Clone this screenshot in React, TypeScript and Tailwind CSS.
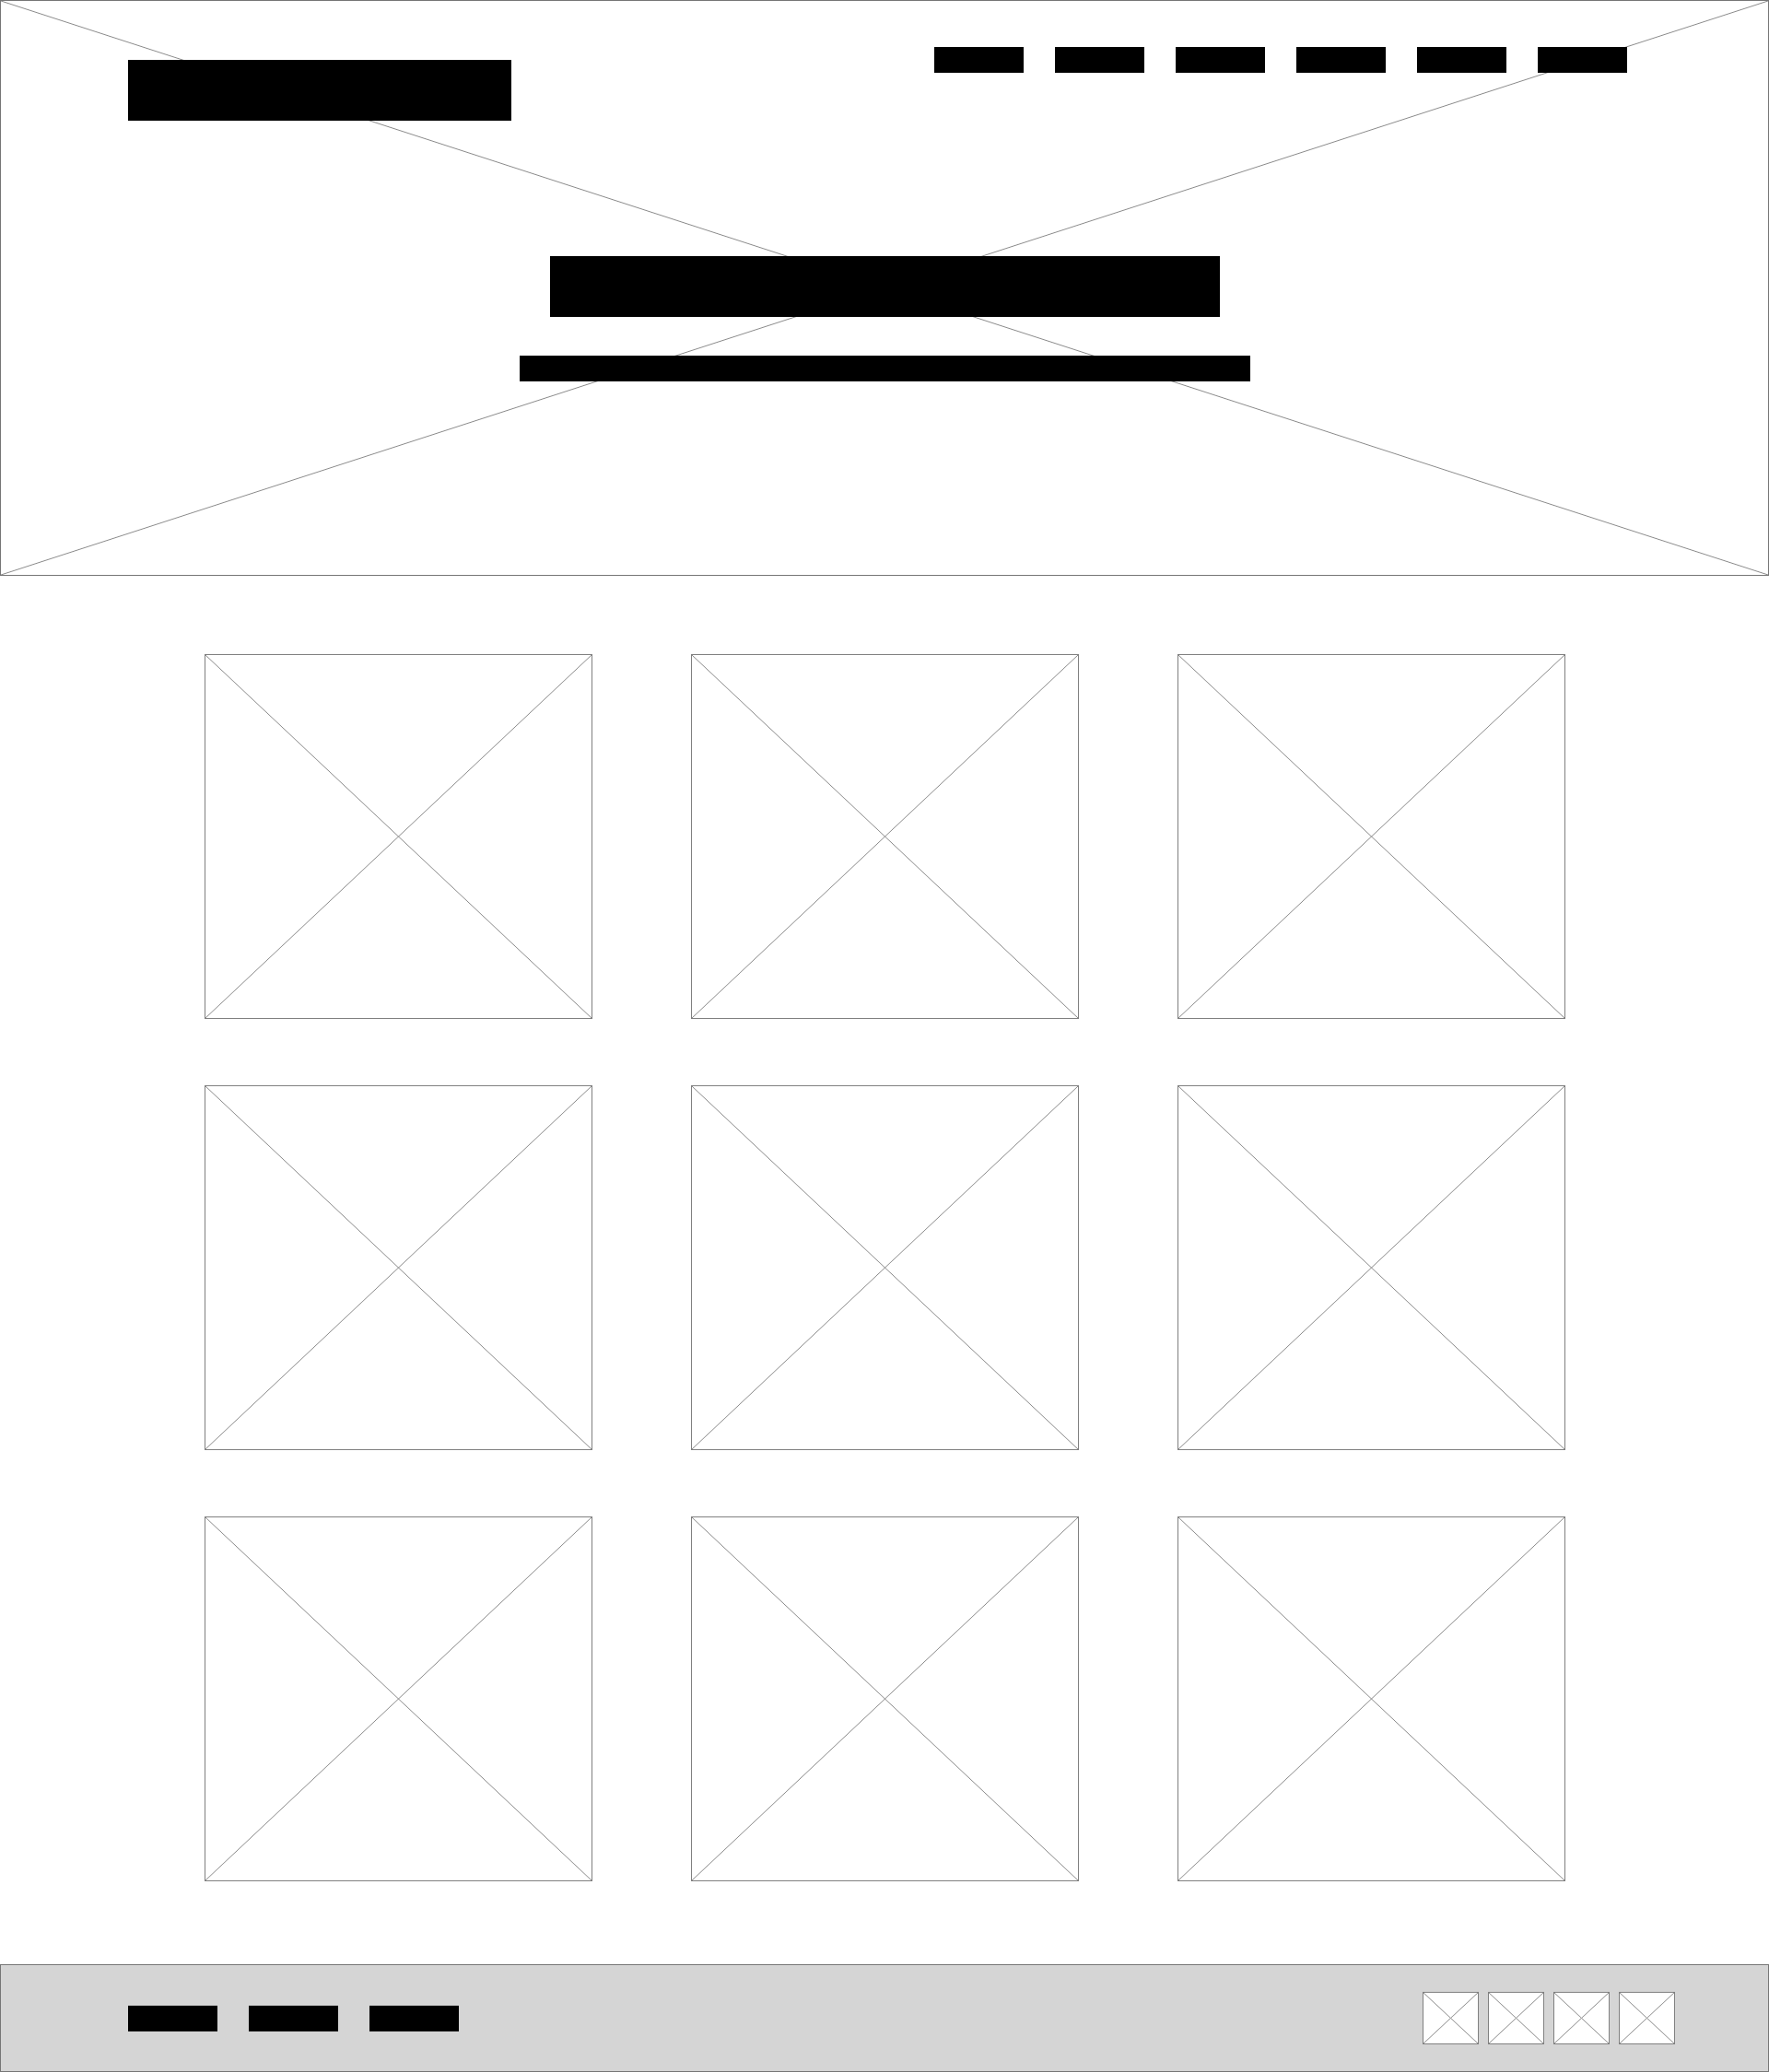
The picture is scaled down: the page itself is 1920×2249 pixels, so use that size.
import React from "react";

function Cross({ color = "#8a8a8a" }: { color?: string }) {
  return (
    <svg
      className="absolute inset-0 w-full h-full pointer-events-none"
      viewBox="0 0 100 100"
      preserveAspectRatio="none"
    >
      <line x1="0" y1="0" x2="100" y2="100" stroke={color} strokeWidth="1" vectorEffect="non-scaling-stroke" />
      <line x1="100" y1="0" x2="0" y2="100" stroke={color} strokeWidth="1" vectorEffect="non-scaling-stroke" />
    </svg>
  );
}

function Bar({ className }: { className: string }) {
  return <div className={`bg-black ${className}`} />;
}

function Placeholder({ className }: { className: string }) {
  return (
    <div className={`relative border border-[#808080] bg-white ${className}`}>
      <Cross />
    </div>
  );
}

export default function App() {
  const nav = [0, 1, 2, 3, 4, 5];
  const cards = [0, 1, 2, 3, 4, 5, 6, 7, 8];
  const links = [0, 1, 2];
  const socials = [0, 1, 2, 3];
  return (
    <div className="w-[1920px] min-h-[2249px] bg-white flex flex-col font-['Liberation_Sans',sans-serif]">
      {/* Hero */}
      <header className="relative h-[625px] border border-[#767676] flex flex-col">
        <Cross color="#8c8c8c" />
        <div className="relative flex justify-between items-start pl-[138px] pr-[153px] pt-[50px]">
          <Bar className="w-[416px] h-[66px] mt-[14px]" />
          <nav className="flex gap-[34px]">
            {nav.map((i) => (
              <Bar key={i} className="w-[97px] h-[28px]" />
            ))}
          </nav>
        </div>
        <div className="relative flex flex-col items-center mt-[147px]">
          <Bar className="w-[727px] h-[66px]" />
          <Bar className="w-[793px] h-[28px] mt-[42px]" />
        </div>
      </header>

      {/* Grid */}
      <main className="flex justify-center pt-[85px] pb-[90px]">
        <div className="grid grid-cols-[421px_421px_421px] gap-x-[107px] gap-y-[72px]">
          {cards.map((i) => (
            <Placeholder key={i} className="w-[421px] h-[396px]" />
          ))}
        </div>
      </main>

      {/* Footer */}
      <footer className="h-[117px] bg-[#d5d5d5] border border-[#767676] flex items-center justify-between pl-[138px] pr-[101px]">
        <div className="flex gap-[34px]">
          {links.map((i) => (
            <Bar key={i} className="w-[97px] h-[28px]" />
          ))}
        </div>
        <div className="flex gap-[10px]">
          {socials.map((i) => (
            <Placeholder key={i} className="w-[61px] h-[57px]" />
          ))}
        </div>
      </footer>
    </div>
  );
}
